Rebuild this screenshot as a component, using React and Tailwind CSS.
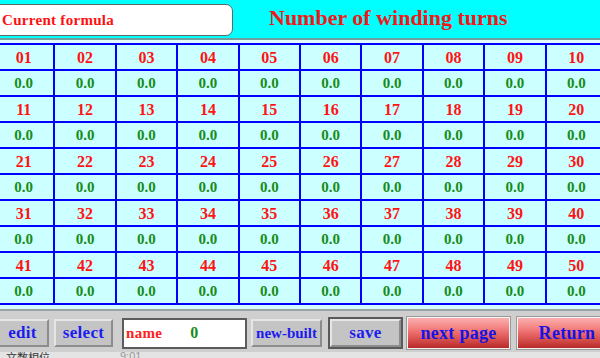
import React from 'react';

const serif = { fontFamily: '"Liberation Serif", "Times New Roman", serif' };

const rows = [0, 1, 2, 3, 4];

const GrayButton = ({ children, className = '' }) => (
    <div className={`shrink-0 h-[28px] flex items-center justify-center whitespace-nowrap overflow-hidden bg-[#c4c4c4] border-t-2 border-l-2 border-[#e6e6e6] border-r-2 border-b-2 border-r-[#8c8c8c] border-b-[#8c8c8c] text-[#1c1cf0] font-bold tracking-[0.3px] ${className}`}>
        {children}
    </div>
);

const RedButton = ({ children, className = '' }) => (
    <div className={`shrink-0 h-[32px] border border-[#f4f4f4] shadow-[0_0_0_1px_#9a9a9a] flex items-center justify-center whitespace-nowrap bg-gradient-to-b from-[#fbb0b0] via-[#ec6a6a] to-[#b82828] text-[#1414e8] font-bold text-[18px] tracking-[0.3px] ${className}`}>
        {children}
    </div>
);

export default function App() {
    return (
        <div className="w-[600px] h-[358px] overflow-hidden bg-[#00ffff] flex flex-col" style={serif}>
            <div className="h-[38px] flex items-start shrink-0">
                <div className="shrink-0 ml-[-12px] mt-[4px] w-[245px] h-[32px] bg-white border border-[#5a6a6a] rounded-[7px] flex items-center pl-[13px] text-[#ff1010] font-bold text-[15px] tracking-[0.3px]">
                    Current formula
                </div>
                <div className="shrink-0 ml-[36px] mt-[4px] text-[#f01818] font-bold text-[22px] leading-[28px]">
                    Number of winding turns
                </div>
            </div>
            <div className="h-[2px] bg-[#6f9f9f] shrink-0" />
            <div className="h-[3px] bg-[#e4fbfb] shrink-0" />

            <div className="w-[616px] ml-[-8px] grid grid-cols-10 gap-[2px] p-[2px] bg-[#0000ff] shrink-0">
                {rows.map((r) => (
                    <React.Fragment key={r}>
                        {Array.from({ length: 10 }, (_, i) => {
                            const n = r * 10 + i + 1;
                            return (
                                <div key={`n${n}`} className="h-[24px] bg-[#ccffff] flex items-center justify-center text-[#ff1414] font-bold text-[16px] pt-[1px]">
                                    {String(n).padStart(2, '0')}
                                </div>
                            );
                        })}
                        {Array.from({ length: 10 }, (_, i) => (
                            <div key={`v${r}-${i}`} className="h-[24px] bg-[#ccffff] flex items-center justify-center text-[#188c18] font-bold text-[15px] pt-[1px]">
                                0.0
                            </div>
                        ))}
                    </React.Fragment>
                ))}
            </div>

            <div className="h-[4px] bg-[#d4fbfb] shrink-0" />
            <div className="h-[2px] bg-[#9aa4a4] shrink-0" />

            <div className="flex-1 bg-[#cfcfcf] flex flex-col">
                <div className="flex items-center mt-[6px] h-[32px]">
                    <GrayButton className="ml-[-4px] w-[53px] text-[17px]">edit</GrayButton>
                    <GrayButton className="ml-[5px] w-[59px] text-[17px]">select</GrayButton>
                    <div className="shrink-0 ml-[9px] w-[125px] h-[31px] bg-white border-2 border-[#5c5c5c] flex items-center">
                        <span className="ml-[2px] text-[#ff2020] font-bold text-[15px] tracking-[0.3px]">name</span>
                        <span className="ml-[28px] text-[#1a8c1a] font-bold text-[16px]">0</span>
                    </div>
                    <GrayButton className="ml-[4px] w-[71px] text-[15px] tracking-[0px]">new-built</GrayButton>
                    <div className="shrink-0 ml-[6px] p-[2px] bg-[#5a5a5a]">
                        <GrayButton className="w-[71px] h-[28px] text-[17px]">save</GrayButton>
                    </div>
                    <RedButton className="ml-[4px] w-[103px]">next page</RedButton>
                    <RedButton className="ml-[7px] w-[100px]">Return</RedButton>
                </div>
                <div className="mt-[3px] flex-1 bg-[#e4e4e4] overflow-hidden flex items-start">
                    <span className="ml-[6px] mt-[-1px] text-[11px] leading-[12px] text-[#333]" style={{ fontFamily: '"Noto Sans CJK SC", sans-serif' }}>文数相位</span>
                    <span className="ml-[70px] mt-[-2px] text-[11px] leading-[12px] text-[#999]" style={{ fontFamily: '"Liberation Sans", sans-serif' }}>9:01</span>
                </div>
            </div>
        </div>
    );
}
